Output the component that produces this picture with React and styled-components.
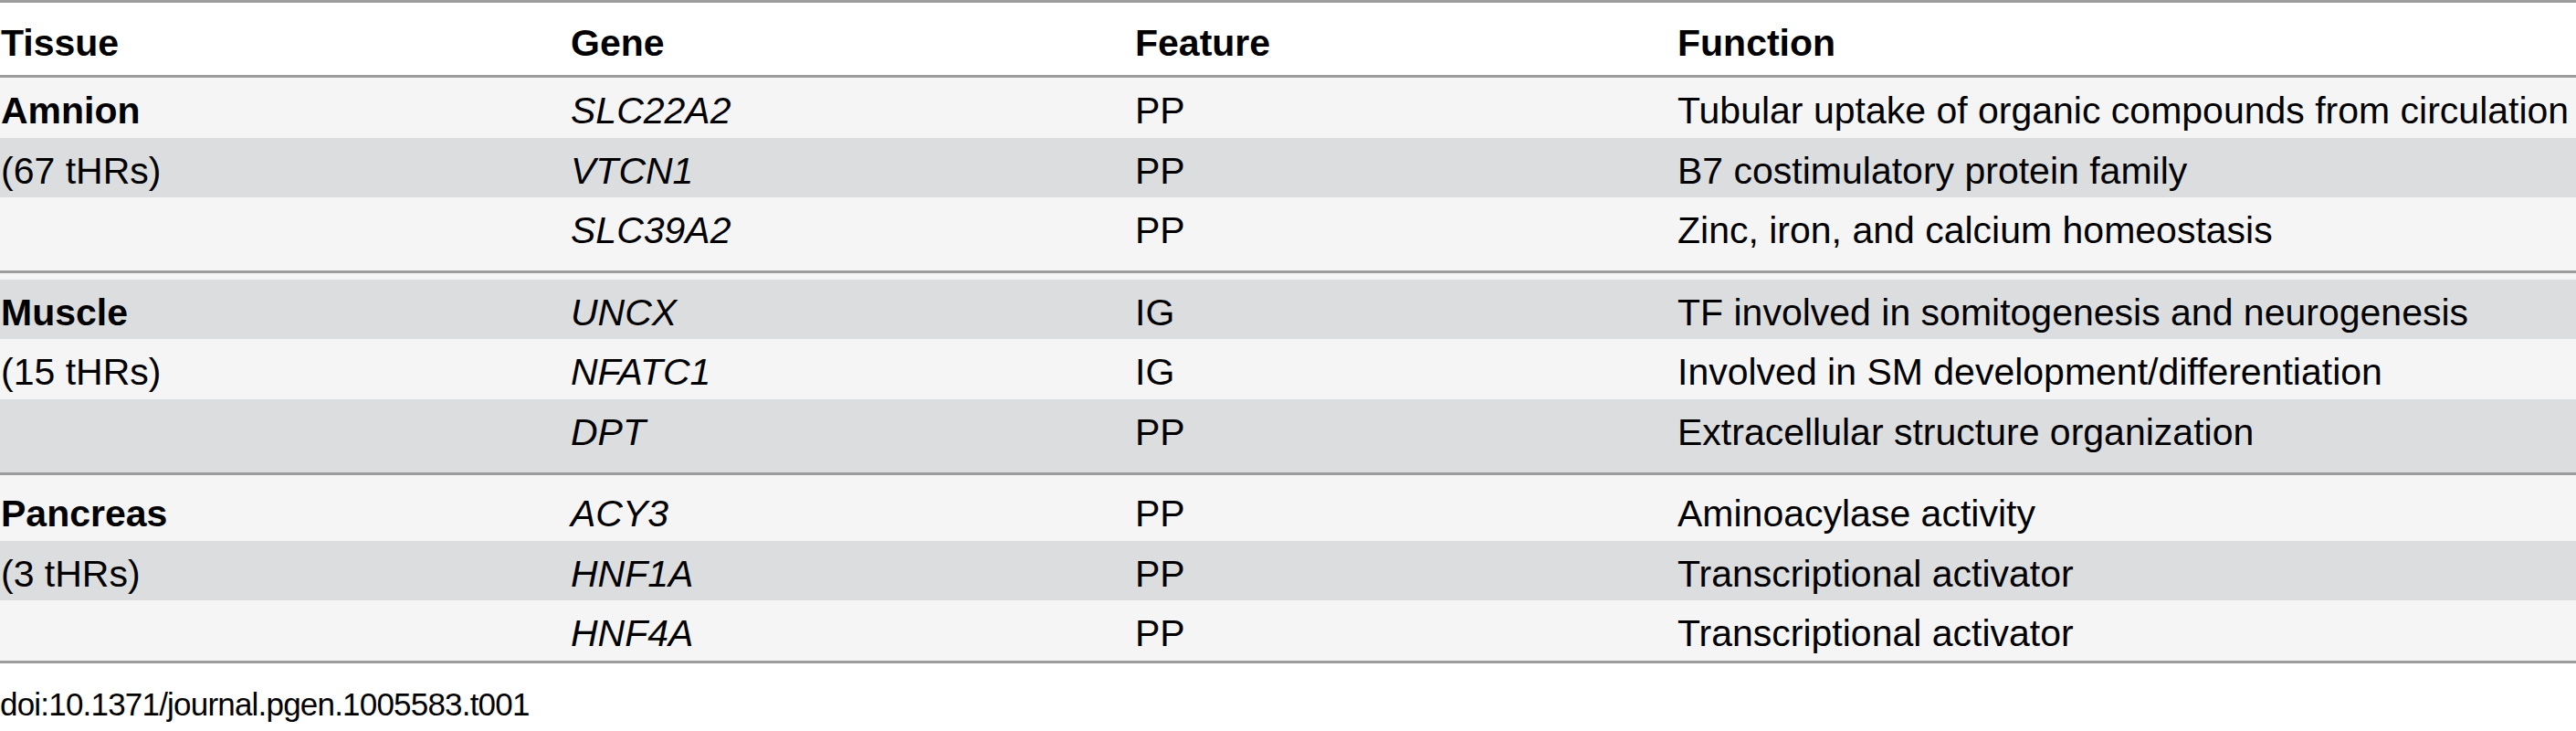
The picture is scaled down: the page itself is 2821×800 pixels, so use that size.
import React from 'react'
import styled, { createGlobalStyle } from 'styled-components'

const GlobalStyle = createGlobalStyle`
  html, body {
    margin: 0;
    padding: 0;
    background: #ffffff;
  }
  body {
    font-family: "Liberation Sans", Arial, Helvetica, sans-serif;
    color: #000000;
  }
`

const TableFrame = styled.div`
  width: 2821px;
  border-top: 3px solid #9c9c9c;
  border-bottom: 3px solid #9c9c9c;
`

const columns = '625px 618px 594px 1fr'

const HeaderRow = styled.div`
  display: grid;
  grid-template-columns: ${columns};
  height: 82px;
  box-sizing: border-box;
  padding-top: 21px;
  background: #ffffff;
  border-bottom: 3px solid #9c9c9c;
  font-size: 41px;
  line-height: 47px;
  font-weight: 700;
`

const HeaderCell = styled.div`
  padding-left: ${({ $first }) => ($first ? '1px' : '0')};
  white-space: nowrap;
`

const Row = styled.div`
  display: grid;
  grid-template-columns: ${columns};
  height: ${({ $extra }) => ($extra ? '80px' : '65.5px')};
  box-sizing: border-box;
  padding-top: 13px;
  background: ${({ $tone }) => ($tone === 'dark' ? '#dcdddf' : '#f5f5f5')};
  font-size: 41px;
  line-height: 47px;
`

const Cell = styled.div`
  white-space: nowrap;
  padding-left: ${({ $first }) => ($first ? '1px' : '0')};
  font-weight: ${({ $bold }) => ($bold ? 700 : 400)};
  font-style: ${({ $italic }) => ($italic ? 'italic' : 'normal')};
`

const Divider = styled.div`
  border-top: 3px solid #9c9c9c;
  height: 6.5px;
  background: #f5f5f5;
`

const Caption = styled.div`
  margin-top: 25px;
  font-size: 35px;
  line-height: 40px;
  letter-spacing: -0.8px;
  white-space: nowrap;
`

const groups = [
  {
    tissue: 'Amnion',
    count: '(67 tHRs)',
    rows: [
      ['SLC22A2', 'PP', 'Tubular uptake of organic compounds from circulation'],
      ['VTCN1', 'PP', 'B7 costimulatory protein family'],
      ['SLC39A2', 'PP', 'Zinc, iron, and calcium homeostasis']
    ],
    start: 'light'
  },
  {
    tissue: 'Muscle',
    count: '(15 tHRs)',
    rows: [
      ['UNCX', 'IG', 'TF involved in somitogenesis and neurogenesis'],
      ['NFATC1', 'IG', 'Involved in SM development/differentiation'],
      ['DPT', 'PP', 'Extracellular structure organization']
    ],
    start: 'dark'
  },
  {
    tissue: 'Pancreas',
    count: '(3 tHRs)',
    rows: [
      ['ACY3', 'PP', 'Aminoacylase activity'],
      ['HNF1A', 'PP', 'Transcriptional activator'],
      ['HNF4A', 'PP', 'Transcriptional activator']
    ],
    start: 'light'
  }
]

const flip = tone => (tone === 'dark' ? 'light' : 'dark')

const App = () => (
  <>
    <GlobalStyle />
    <TableFrame>
      <HeaderRow>
        <HeaderCell $first>Tissue</HeaderCell>
        <HeaderCell>Gene</HeaderCell>
        <HeaderCell>Feature</HeaderCell>
        <HeaderCell>Function</HeaderCell>
      </HeaderRow>
      {groups.map((group, gi) => {
        const lastGroup = gi === groups.length - 1
        return (
          <React.Fragment key={group.tissue}>
            {group.rows.map(([gene, feature, fn], ri) => {
              const tone = ri % 2 === 0 ? group.start : flip(group.start)
              const tissueText = ri === 0 ? group.tissue : ri === 1 ? group.count : ''
              return (
                <Row
                  key={gene}
                  $tone={tone}
                  $extra={!lastGroup && ri === group.rows.length - 1}
                >
                  <Cell $first $bold={ri === 0}>{tissueText}</Cell>
                  <Cell $italic>{gene}</Cell>
                  <Cell>{feature}</Cell>
                  <Cell>{fn}</Cell>
                </Row>
              )
            })}
            {!lastGroup && <Divider />}
          </React.Fragment>
        )
      })}
    </TableFrame>
    <Caption>doi:10.1371/journal.pgen.1005583.t001</Caption>
  </>
)

export default App
